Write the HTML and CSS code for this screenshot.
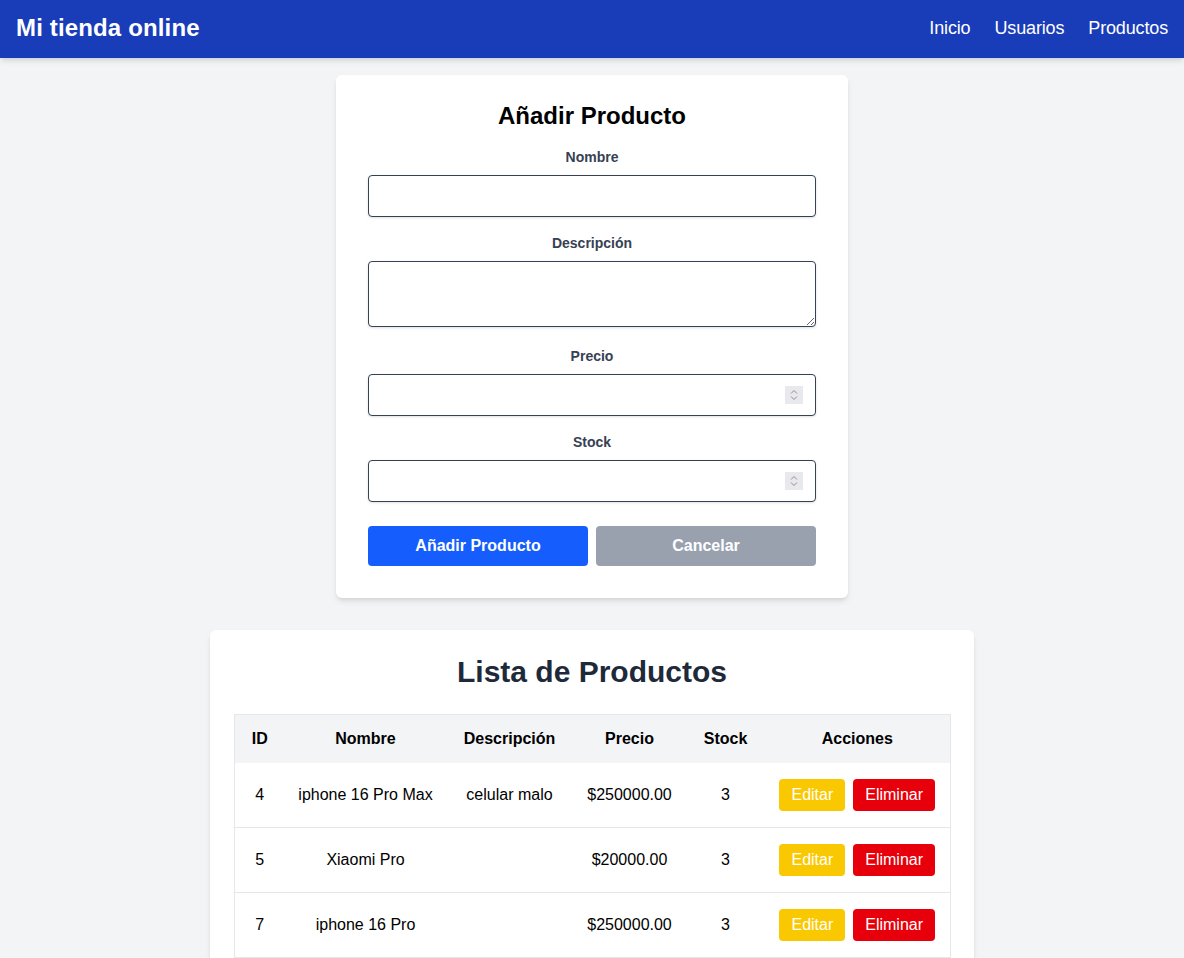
FILE: index.html
```html
<!DOCTYPE html>
<html lang="es">
<head>
<meta charset="utf-8">
<title>Mi tienda online</title>
<link rel="stylesheet" href="styles.css">
</head>
<body>
<nav class="navbar">
  <div class="brand">Mi tienda online</div>
  <div class="links">
    <a href="#">Inicio</a>
    <a href="#">Usuarios</a>
    <a href="#">Productos</a>
  </div>
</nav>
<main class="main">
  <section class="card form-card">
    <h2 class="form-title">Añadir Producto</h2>
    <form class="form">
      <label class="label" for="nombre">Nombre</label>
      <input class="input" id="nombre" type="text">
      <label class="label" for="desc">Descripción</label>
      <textarea class="input textarea" id="desc" rows="2"></textarea>
      <label class="label" for="precio">Precio</label>
      <div class="num-wrap">
        <input class="input" id="precio" type="number">
        <span class="spin" aria-hidden="true"><svg width="18" height="18" viewBox="0 0 18 18"><path d="M6 7.5 L9 4.5 L12 7.5 M6 10.5 L9 13.5 L12 10.5" fill="none" stroke="#8e8e93" stroke-width="1"/></svg></span>
      </div>
      <label class="label" for="stock">Stock</label>
      <div class="num-wrap">
        <input class="input" id="stock" type="number">
        <span class="spin" aria-hidden="true"><svg width="18" height="18" viewBox="0 0 18 18"><path d="M6 7.5 L9 4.5 L12 7.5 M6 10.5 L9 13.5 L12 10.5" fill="none" stroke="#8e8e93" stroke-width="1"/></svg></span>
      </div>
      <div class="actions">
        <button type="button" class="btn btn-blue">Añadir Producto</button>
        <button type="button" class="btn btn-gray">Cancelar</button>
      </div>
    </form>
  </section>
  <section class="card list-card">
    <h2 class="list-title">Lista de Productos</h2>
    <table class="table">
      <thead>
        <tr>
          <th class="c-id">ID</th>
          <th class="c-name">Nombre</th>
          <th class="c-desc">Descripción</th>
          <th class="c-price">Precio</th>
          <th class="c-stock">Stock</th>
          <th class="c-act">Acciones</th>
        </tr>
      </thead>
      <tbody>
        <tr>
          <td>4</td><td>iphone 16 Pro Max</td><td>celular malo</td><td>$250000.00</td><td>3</td>
          <td><div class="row-actions"><button class="sbtn sbtn-yellow">Editar</button><button class="sbtn sbtn-red">Eliminar</button></div></td>
        </tr>
        <tr>
          <td>5</td><td>Xiaomi Pro</td><td></td><td>$20000.00</td><td>3</td>
          <td><div class="row-actions"><button class="sbtn sbtn-yellow">Editar</button><button class="sbtn sbtn-red">Eliminar</button></div></td>
        </tr>
        <tr>
          <td>7</td><td>iphone 16 Pro</td><td></td><td>$250000.00</td><td>3</td>
          <td><div class="row-actions"><button class="sbtn sbtn-yellow">Editar</button><button class="sbtn sbtn-red">Eliminar</button></div></td>
        </tr>
      </tbody>
    </table>
  </section>
</main>
</body>
</html>
```
FILE: styles.css
```css
* { box-sizing: border-box; }
html, body { margin: 0; padding: 0; }
body {
  background: #f3f4f6;
  font-family: "Liberation Sans", Arial, sans-serif;
  color: #000;
}
.navbar {
  height: 58px;
  background: #193cb8;
  display: flex;
  align-items: center;
  justify-content: space-between;
  padding: 0 16px 2px;
  box-shadow: 0 4px 6px -1px rgba(0,0,0,0.1), 0 2px 4px -2px rgba(0,0,0,0.1);
  position: relative;
}
.brand {
  color: #fff;
  font-size: 24px;
  font-weight: bold;
  line-height: 32px;
  letter-spacing: 0.15px;
}
.links { display: flex; gap: 24px; }
.links a {
  color: #fff;
  font-size: 18px;
  line-height: 28px;
  text-decoration: none;
  letter-spacing: -0.15px;
}
.main {
  display: flex;
  flex-direction: column;
  align-items: center;
  padding-top: 17px;
  gap: 32px;
}
.card {
  background: #fff;
  border-radius: 6px;
  box-shadow: 0 4px 6px -1px rgba(0,0,0,0.1), 0 2px 4px -2px rgba(0,0,0,0.1);
}
.form-card {
  width: 512px;
  padding: 25px 32px 32px;
}
.form-title {
  margin: 0 0 15px;
  font-size: 24px;
  line-height: 32px;
  text-align: center;
  font-weight: bold;
}
.form { display: flex; flex-direction: column; }
.label {
  display: block;
  text-align: center;
  color: #364153;
  font-size: 14px;
  font-weight: bold;
  line-height: 20px;
  margin-bottom: 8px;
}
.input {
  display: block;
  width: 100%;
  height: 42px;
  border: 1px solid #364153;
  border-radius: 4px;
  padding: 8px 12px;
  font-family: inherit;
  font-size: 16px;
  line-height: 24px;
  margin-bottom: 16px;
  box-shadow: 0 1px 3px 0 rgba(0,0,0,0.1), 0 1px 2px -1px rgba(0,0,0,0.1);
}
.textarea {
  height: 66px;
  resize: vertical;
  margin-bottom: 19px;
}
.num-wrap { position: relative; }
.num-wrap .input { padding-right: 36px; }
.num-wrap .input::-webkit-inner-spin-button,
.num-wrap .input::-webkit-outer-spin-button {
  -webkit-appearance: none;
  margin: 0;
}
.spin {
  position: absolute;
  right: 13px;
  top: 12px;
  width: 18px;
  height: 18px;
  background: #e8e8ed;
  display: flex;
  pointer-events: none;
}
.actions {
  display: flex;
  gap: 8px;
  margin-top: 8px;
}
.btn {
  flex: 1;
  height: 40px;
  border: none;
  border-radius: 4px;
  color: #fff;
  font-family: inherit;
  font-size: 16px;
  font-weight: bold;
  line-height: 24px;
}
.btn-blue { background: #155dfc; }
.btn-gray { background: #99a1af; }
.list-card {
  width: 764px;
  padding: 24px 24px 24px;
}
.list-title {
  margin: 0 0 24px;
  font-size: 30px;
  line-height: 36px;
  text-align: center;
  color: #1e2939;
  font-weight: bold;
}
.table {
  width: 716px;
  table-layout: fixed;
  border-collapse: collapse;
  border: 1px solid #e5e7eb;
}
.table th {
  background: #f3f4f6;
  font-weight: bold;
  font-size: 16px;
  line-height: 24px;
  padding: 12px 0;
  text-align: center;
}
.table td {
  font-size: 16px;
  line-height: 24px;
  padding: 16px 0;
  text-align: center;
  border-bottom: 1px solid #e5e7eb;
}
.c-id { width: 50px; }
.c-name { width: 162px; }
.c-desc { width: 126px; }
.c-price { width: 114px; }
.c-stock { width: 78px; }
.c-act { width: 186px; }
.row-actions {
  display: flex;
  justify-content: center;
  gap: 8px;
}
.sbtn {
  border: none;
  border-radius: 4px;
  padding: 4px 12px;
  color: #fff;
  font-family: inherit;
  font-size: 16px;
  line-height: 24px;
}
.sbtn-yellow { background: #fac800; }
.sbtn-red { background: #e7000b; }
```
